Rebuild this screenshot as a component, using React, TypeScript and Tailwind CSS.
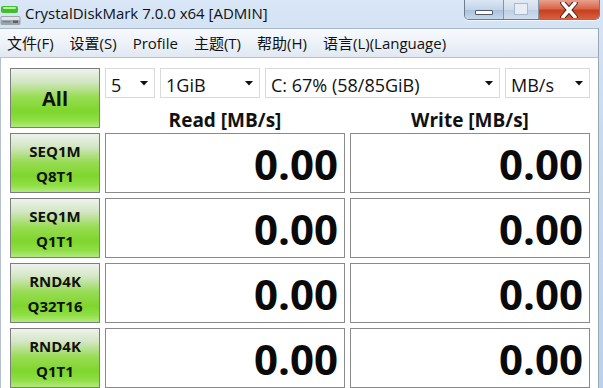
const font = "font-['Open_Sans','Noto_Sans_CJK_SC',sans-serif]";

const greenButton =
  "border border-[#7d7d7d] bg-[linear-gradient(to_bottom,#eef2ec_0%,#d3e6c4_22%,#98dc55_48%,#7fd62c_72%,#8edf45_88%,#b0ea7c_100%)] text-[#111]";

const tests = [
  { top: "SEQ1M", bottom: "Q8T1" },
  { top: "SEQ1M", bottom: "Q1T1" },
  { top: "RND4K", bottom: "Q32T16" },
  { top: "RND4K", bottom: "Q1T1" },
];

const menuItems = ["文件(F)", "设置(S)", "Profile", "主题(T)", "帮助(H)", "语言(L)(Language)"];

const AppIcon = () => (
  <svg width="21" height="22" viewBox="0 0 21 22">
    <rect x="1" y="2" width="17" height="7" rx="2" fill="#3fbf2a" />
    <rect x="3" y="3" width="13" height="2" rx="1" fill="#b8f0a8" />
    <rect x="0.5" y="12" width="20" height="9" rx="1.5" fill="#9ea6ad" />
    <rect x="1.5" y="13" width="18" height="3" fill="#dfe4e8" />
    <rect x="13" y="16.5" width="5" height="2.5" fill="#5b6269" />
    <rect x="2.5" y="17" width="8" height="1.5" fill="#7e868d" />
  </svg>
);

const Arrow = () => (
  <svg width="8" height="5" viewBox="0 0 8 5">
    <path d="M0 0 L8 0 L4 4.5 Z" fill="#111" />
  </svg>
);

const CaptionButtons = () => (
  <div className="flex h-[20px] self-start mr-[3px] rounded-b-[5px] border border-t-0 border-[#6b7c91] overflow-hidden shadow-[0_1px_0_rgba(255,255,255,0.7)]">
    <div className="w-[39px] flex items-center justify-center bg-[linear-gradient(to_bottom,#dbe6f3_0%,#c3d4e8_50%,#aac0da_51%,#c4d7ec_100%)] border-r border-[#8596ab]">
      <div className="w-[18px] h-[5px] mt-[5px] bg-white border border-[#4a5868] rounded-[1px]" />
    </div>
    <div className="w-[35px] flex items-center justify-center bg-[linear-gradient(to_bottom,#e2eaf4_0%,#cfdcec_50%,#bdcee2_51%,#cfdeef_100%)] border-r border-[#8596ab]">
      <div className="w-[14px] h-[12px] mb-[2px] border border-[#aab8c8] bg-[#e6edf5]" />
    </div>
    <div className="w-[60px] flex items-center justify-center bg-[linear-gradient(to_bottom,#e9a08d_0%,#d8674b_45%,#c7401f_55%,#d7603e_100%)]">
      <svg width="20" height="16" viewBox="0 0 20 16">
        <path
          d="M4 1 L16 15 M16 1 L4 15"
          stroke="#4d2014"
          strokeWidth="5.5"
          strokeLinecap="round"
        />
        <path
          d="M4 1 L16 15 M16 1 L4 15"
          stroke="#ffffff"
          strokeWidth="3.5"
          strokeLinecap="round"
        />
      </svg>
    </div>
  </div>
);

const Combo = (props: { label: string; width: string }) => (
  <div
    className={`${props.width} h-[30px] flex items-center justify-between border border-[#d9d9d9] bg-white pl-[5px] pr-[6px] text-[18px] text-[#111]`}
  >
    <span className="pt-[5px]">{props.label}</span>
    <Arrow />
  </div>
);

const ValueCell = () => (
  <div className="h-[60px] flex items-center justify-end border border-[#8a8a8a] bg-white pr-[6px] pt-[2px] text-[42px] font-bold leading-none text-[#0a0a0a]">
    0.00
  </div>
);

export default function App() {
  return (
    <div
      className={`${font} w-[603px] h-[388px] overflow-hidden flex flex-col bg-[linear-gradient(to_bottom,#d8e6f6_0%,#c4d9ef_40%,#b9d1ec_100%)]`}
    >
      <div className="h-[30px] flex items-start justify-between">
        <div className="flex items-center h-[27px]">
          <div className="mt-[2px]">
            <AppIcon />
          </div>
          <span className="ml-[4px] text-[15px] text-[#111]">
            CrystalDiskMark 7.0.0 x64 [ADMIN]
          </span>
        </div>
        <CaptionButtons />
      </div>
      <div className="w-[599px] flex-1 flex flex-col border-r border-[#9aa6b4]">
        <div className="h-[30px] flex items-center gap-[16px] border-t border-[#a9b9cc] border-b border-b-[#b8c2cd] bg-[linear-gradient(to_bottom,#f7f9fc_0%,#edf2f8_50%,#e1e8f1_100%)] pl-[7px] text-[15px] text-[#111]">
          {menuItems.map((item) => (
            <span key={item}>{item}</span>
          ))}
        </div>
        <div className="flex-1 bg-white border-l border-[#b3bfcc] pl-[9px] pt-[10px]">
          <div className="grid grid-cols-[90px_240px_240px] gap-x-[5px] gap-y-[5px]">
            <div
              className={`${greenButton} h-[60px] flex items-center justify-center pt-[2px] text-[20px] font-bold`}
            >
              All
            </div>
            <div className="col-span-2 flex flex-col">
              <div className="flex gap-[5px]">
                <Combo label="5" width="w-[50px]" />
                <Combo label="1GiB" width="w-[100px]" />
                <Combo label="C: 67% (58/85GiB)" width="w-[235px]" />
                <Combo label="MB/s" width="w-[85px]" />
              </div>
              <div className="h-[30px] grid grid-cols-2 gap-x-[5px] text-[19px] font-bold leading-[24px] text-[#111]">
                <div className="flex items-start justify-center pt-[10px]">Read [MB/s]</div>
                <div className="flex items-start justify-center pt-[10px]">Write [MB/s]</div>
              </div>
            </div>
            {tests.map((t, i) => (
              <div key={i} className="contents">
                <div
                  className={`${greenButton} h-[60px] flex flex-col items-center justify-center pt-[2px] text-[15px] font-bold leading-[25px]`}
                >
                  <span>{t.top}</span>
                  <span>{t.bottom}</span>
                </div>
                <ValueCell />
                <ValueCell />
              </div>
            ))}
          </div>
        </div>
      </div>
    </div>
  );
}
